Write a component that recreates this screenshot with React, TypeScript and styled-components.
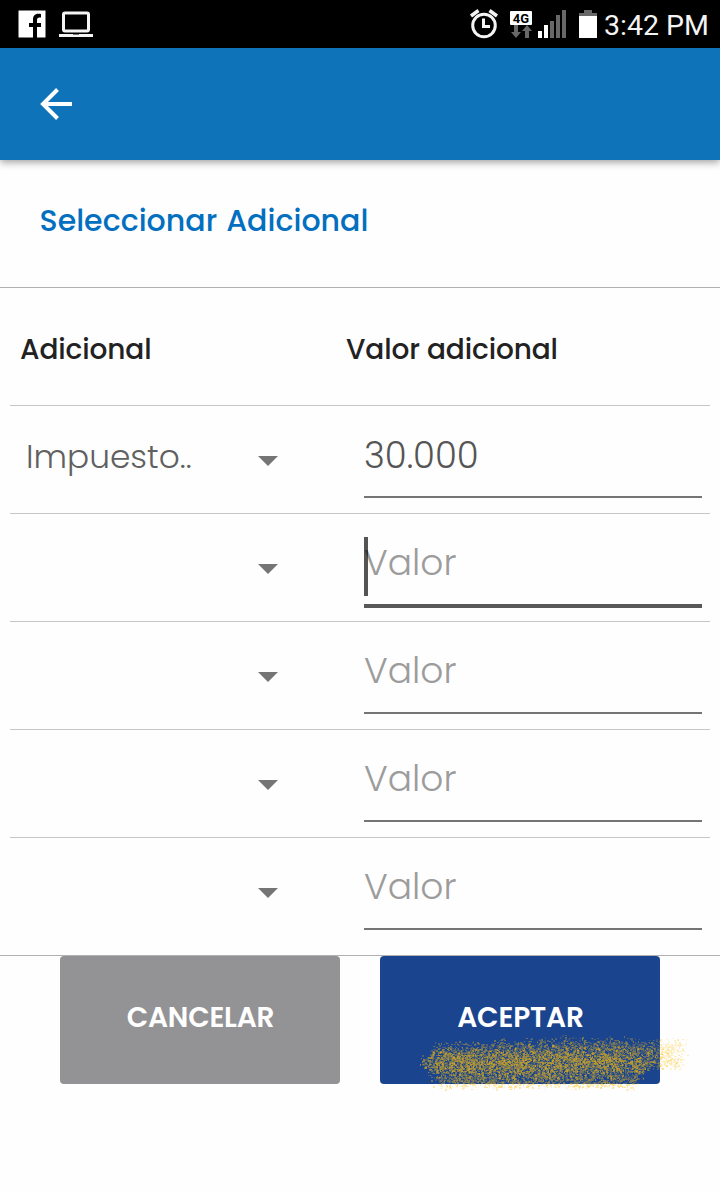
import React from "react";
import styled, { createGlobalStyle } from "styled-components";

const GlobalStyle = createGlobalStyle`
  * { box-sizing: border-box; }
  body { margin: 0; background: #fefefe; }
`;

const Screen = styled.div`
  display: flex;
  flex-direction: column;
  width: 720px;
  height: 1193px;
  overflow: hidden;
  background: #fefefe;
  font-family: Poppins, Inter, sans-serif;
`;

const StatusBar = styled.div`
  flex: none;
  display: flex;
  align-items: center;
  justify-content: space-between;
  height: 48px;
  padding: 0 11px 0 18px;
  background: #000;
`;

const StatusIcons = styled.svg`
  display: block;
  flex: none;
`;

const StatusGroup = styled.div`
  display: flex;
  align-items: center;
`;

const Clock = styled.span`
  margin-left: 6px;
  width: 105px;
  color: #f3f3f3;
  font: 400 28.5px/48px Roboto, sans-serif;
  white-space: nowrap;
  padding-top: 3px;
`;

const AppBar = styled.header`
  position: relative;
  flex: none;
  display: flex;
  align-items: center;
  height: 112px;
  padding-left: 40px;
  background: #0f73ba;
  box-shadow: 0 2px 8px rgba(0, 0, 0, 0.4);
`;

const Title = styled.h1`
  flex: none;
  margin: 0;
  height: 128px;
  padding: 41px 0 0 39.5px;
  border-bottom: 1px solid #b0b0b0;
  color: #026fc0;
  font-size: 30px;
  font-weight: 500;
  line-height: 40px;
  letter-spacing: 0.02px;
  word-spacing: 1.2px;
`;

const Table = styled.main`
  flex: none;
  height: 668px;
  padding: 0 10px;
  border-bottom: 1px solid #b0b0b0;
`;

const TableHead = styled.div`
  display: grid;
  grid-template-columns: 326px 1fr;
  align-items: center;
  height: 117px;
  padding: 7px 0 0 10px;
  color: #222;
  font-size: 28px;
  font-weight: 500;
  letter-spacing: -0.12px;
`;

const Row = styled.div`
  display: grid;
  grid-template-columns: 354px 338px;
  height: 108px;
  border-top: 1px solid #c6c6c6;
`;

const Select = styled.div`
  display: flex;
  justify-content: space-between;
  padding: 31px 86px 0 16px;
  color: #606060;
  font-size: 32.8px;
  font-weight: 300;
  line-height: 40px;
  font-kerning: none;
`;

const Caret = styled.i`
  width: 20px;
  height: 10px;
  margin-top: 19px;
  background: #757575;
  clip-path: polygon(0 0, 100% 0, 50% 100%);
`;

const Field = styled.div<{ $focused: boolean; $empty: boolean }>`
  position: relative;
  height: ${(p) => (p.$focused ? 94 : 92)}px;
  padding-top: ${(p) => (p.$empty ? 29 : 30)}px;
  border-bottom: ${(p) => (p.$focused ? "4px solid #585858" : "2px solid #757575")};
  color: ${(p) => (p.$empty ? "#9c9c9c" : "#555")};
  font-size: ${(p) => (p.$empty ? 36 : 35.5)}px;
  font-weight: 300;
  line-height: 40px;
  font-kerning: ${(p) => (p.$empty ? "normal" : "none")};
`;

const TextCursor = styled.i`
  position: absolute;
  left: 0;
  top: 23px;
  width: 4px;
  height: 59px;
  background: rgba(0, 0, 0, 0.67);
`;

const Actions = styled.footer`
  position: relative;
  display: flex;
  gap: 40px;
  padding: 0 60px;
`;

const Button = styled.button<{ $color: string; $spacing: number }>`
  width: 280px;
  height: 128px;
  padding: 0 0 4px 1px;
  border: 0;
  border-radius: 4px;
  background: ${(p) => p.$color};
  color: #fff;
  font: inherit;
  font-size: 28px;
  font-weight: 600;
  letter-spacing: ${(p) => p.$spacing}px;
`;

const SprayMark = styled.svg`
  position: absolute;
  left: 410px;
  top: 76px;
  pointer-events: none;
`;

const sprayLevels = [0.15, 0.25, 0.36, 0.5];

// Seeded speckles, so the highlight is the same on every render.
function makeSpray(): string[] {
  let seed = 90217;
  const rnd = () => {
    seed = (seed * 1664525 + 1013904223) >>> 0;
    return seed / 4294967296;
  };
  const clamp = (v: number) => Math.max(0, Math.min(1, v));
  const paths = ["", "", "", ""];
  for (let y = 0; y < 58; y++) {
    for (let x = 0; x < 284; x++) {
      const top = x < 150 ? 11 - x * 0.06 : 2 + (x - 150) * 0.025;
      const bottom = x < 225 ? 58 : 38 + clamp((240 - x) / 15) * 18;
      const left = 5 + Math.abs(y - 31) * 0.75;
      const edge = Math.min((y - top) / 12, (bottom - y) / 8, (x - left) / 24, (278 - x) / 16);
      const core = Math.exp(-(((y - 30) / 13) ** 2)) * clamp((270 - x) / 70);
      const density = clamp(edge) * (0.42 + 0.33 * core);
      if (rnd() < density) {
        const strength = rnd() * (0.7 + core * 0.4) * (x > 245 ? 0.7 : 1);
        const level = Math.min(3, Math.floor(strength * 4));
        const w = rnd() < 0.7 ? 2 : 1;
        const h = rnd() < 0.5 ? 2 : 1;
        paths[level] += `M${x} ${y}h${w}v${h}h-${w}z`;
      }
    }
  }
  return paths;
}

const spray = makeSpray();

const rows = ["30.000", "", "", "", ""];

export default function App() {
  return (
    <Screen>
      <GlobalStyle />
      <StatusBar>
        <StatusIcons width="76" height="48" viewBox="18 0 76 48">
          <path fill="#fff" d="M18.500 10.500h27v27h-8.500V27h4v-4h-4v-3c0-2 1-2.500 4-2.500v-3.500c-6-1-8 1.500-8 6V23h-4v4h4v10.500h-14.500z" />
          <rect x="63.500" y="13" width="25" height="18" rx="1.500" fill="none" stroke="#f4f4f4" strokeWidth="3" />
          <path fill="#f4f4f4" d="M59 34h34v3H59z" />
          <path fill="#777" d="M73 34h6v1h-6z" />
        </StatusIcons>
        <StatusGroup>
          <StatusIcons width="129" height="48" viewBox="469 0 129 48">
            <g fill="none" stroke="#f4f4f4" strokeWidth="3">
              <circle cx="484" cy="25.500" r="11.300" />
              <path d="M483.500 18.500v8h6.500" />
              <path d="M471 16l7.500-5.500M497 16l-7.500-5.500" strokeWidth="3.500" />
            </g>
            <rect x="510" y="11" width="22" height="14" rx="1" fill="#fff" />
            <text x="521" y="22.700" textAnchor="middle" fontFamily="Roboto, sans-serif" fontWeight="700" fontSize="13" fill="#000">4G</text>
            <path fill="#686868" d="M514 25h4v7h3l-5 6-5-6h3zM525 38v-7h-3l5-6 5 6h-3v7z" />
            <path fill="#fff" d="M538 31h4v7h-4zM544 25h4v13h-4z" />
            <path fill="#686868" d="M550 21h4v17h-4zM556 15h4v23h-4zM562 10h4v28h-4z" />
            <path fill="#686868" d="M584 10h8v3h5v4h-18v-4h5z" />
            <path fill="#fff" d="M579 16h18v22h-18z" />
          </StatusIcons>
          <Clock>3:42 PM</Clock>
        </StatusGroup>
      </StatusBar>
      <AppBar>
        <svg width="34" height="36" viewBox="0 0 34 36" fill="none" stroke="#fff" strokeWidth="4">
          <path d="M32 18H4M17.500 3.500L3 18l14.500 14.500" />
        </svg>
      </AppBar>
      <Title>Seleccionar Adicional</Title>
      <Table>
        <TableHead>
          <span>Adicional</span>
          <span>Valor adicional</span>
        </TableHead>
        {rows.map((value, i) => (
          <Row key={i}>
            <Select>
              <span>{value ? "Impuesto.." : ""}</span>
              <Caret />
            </Select>
            <Field $focused={i === 1} $empty={!value}>
              {value || "Valor"}
              {i === 1 && <TextCursor />}
            </Field>
          </Row>
        ))}
      </Table>
      <Actions>
        <Button $color="#939395" $spacing={-0.25}>CANCELAR</Button>
        <Button $color="#1b448f" $spacing={-0.15}>ACEPTAR</Button>
        <SprayMark width="284" height="62">
          {spray.map((d, i) => (
            <path key={i} d={d} fill="#fdbe08" fillOpacity={sprayLevels[i]} />
          ))}
        </SprayMark>
      </Actions>
    </Screen>
  );
}
